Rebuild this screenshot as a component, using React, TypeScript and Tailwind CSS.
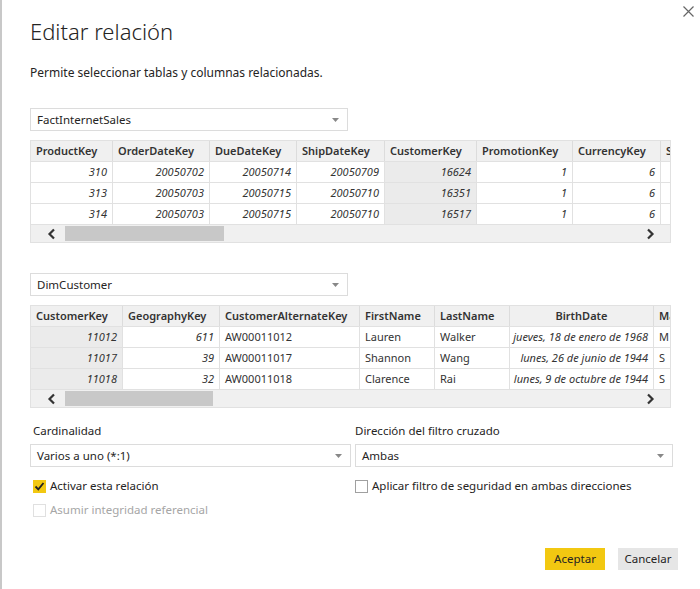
import React from "react";

const F = { fontFamily: "'Noto Sans', 'Open Sans', sans-serif" };

type Col = { name: string; w: number; shaded?: boolean; align?: "left" | "right"; italic?: boolean; headCenter?: boolean };

function Arrow() {
  return (
    <svg width="7" height="4" viewBox="0 0 7 4" className="shrink-0">
      <path d="M0 0 L7 0 L3.5 4 Z" fill="#888" />
    </svg>
  );
}

function Dropdown({ label, w }: { label: string; w: string }) {
  return (
    <div className={`${w} h-[23px] border border-[#dcdcdc] bg-white flex items-center justify-between pl-[6px] pr-[8px] text-[11.5px] text-[#252423]`}>
      <span>{label}</span>
      <Arrow />
    </div>
  );
}

function Chevron({ dir }: { dir: "l" | "r" }) {
  return (
    <svg width="10" height="12" viewBox="0 0 10 12">
      {dir === "l" ? (
        <path d="M7 1.5 L2.5 6 L7 10.5" stroke="#333" strokeWidth="2.2" fill="none" />
      ) : (
        <path d="M3 1.5 L7.5 6 L3 10.5" stroke="#333" strokeWidth="2.2" fill="none" />
      )}
    </svg>
  );
}

function Table({ cols, rows, thumb }: { cols: Col[]; rows: string[][]; thumb: number }) {
  return (
    <div className="w-[641px] border border-[#e1e1e1] overflow-hidden bg-white">
      <div className="flex h-[21px] bg-[#f0f0f0] border-b border-[#e1e1e1]">
        {cols.map((c, i) => (
          <div
            key={i}
            style={{ width: c.w }}
            className={`shrink-0 border-r border-[#dcdcdc] px-[5px] flex items-center text-[11px] font-semibold text-[#333] whitespace-nowrap overflow-hidden ${c.headCenter ? "justify-center" : ""}`}
          >
            {c.name}
          </div>
        ))}
      </div>
      {rows.map((r, ri) => (
        <div key={ri} className="flex h-[21px] border-b border-[#e1e1e1]">
          {cols.map((c, i) => (
            <div
              key={i}
              style={{ width: c.w }}
              className={`shrink-0 border-r border-[#e1e1e1] px-[5px] flex items-center text-[11px] text-[#333] whitespace-nowrap overflow-hidden ${c.shaded ? "bg-[#ebebeb]" : ""} ${c.align === "left" ? "justify-start" : "justify-end"} ${c.italic ? "italic" : ""}`}
            >
              {r[i]}
            </div>
          ))}
        </div>
      ))}
      <div className="flex h-[17px] bg-[#f0f0f0] items-center">
        <div className="w-[34px] flex justify-center pl-[8px]">
          <Chevron dir="l" />
        </div>
        <div style={{ width: thumb }} className="h-[15px] bg-[#c8c8c8]" />
        <div className="flex-1" />
        <div className="w-[32px] flex justify-center pr-[8px]">
          <Chevron dir="r" />
        </div>
      </div>
    </div>
  );
}

function Check({ checked, disabled }: { checked?: boolean; disabled?: boolean }) {
  if (checked)
    return (
      <div className="w-[13px] h-[13px] bg-[#f2c811] flex items-center justify-center shrink-0">
        <svg width="11" height="11" viewBox="0 0 11 11">
          <path d="M1.5 5.5 L4.3 8.3 L9.5 2" stroke="#222" strokeWidth="1.8" fill="none" />
        </svg>
      </div>
    );
  return (
    <div className={`w-[13px] h-[13px] border shrink-0 bg-white ${disabled ? "border-[#e0e0e0]" : "border-[#a0a0a0]"}`} />
  );
}

export default function App() {
  const cols1: Col[] = [
    { name: "ProductKey", w: 82, italic: true },
    { name: "OrderDateKey", w: 97, italic: true },
    { name: "DueDateKey", w: 87, italic: true },
    { name: "ShipDateKey", w: 88, italic: true },
    { name: "CustomerKey", w: 92, italic: true, shaded: true },
    { name: "PromotionKey", w: 96, italic: true },
    { name: "CurrencyKey", w: 88, italic: true },
    { name: "SalesTerritoryKey", w: 100, italic: true },
  ];
  const rows1 = [
    ["310", "20050702", "20050714", "20050709", "16624", "1", "6", ""],
    ["313", "20050703", "20050715", "20050710", "16351", "1", "6", ""],
    ["314", "20050703", "20050715", "20050710", "16517", "1", "6", ""],
  ];
  const cols2: Col[] = [
    { name: "CustomerKey", w: 92, italic: true, shaded: true },
    { name: "GeographyKey", w: 97, italic: true },
    { name: "CustomerAlternateKey", w: 140, align: "left" },
    { name: "FirstName", w: 75, align: "left" },
    { name: "LastName", w: 75, align: "left" },
    { name: "BirthDate", w: 144, italic: true, headCenter: true },
    { name: "MaritalStatus", w: 80, align: "left" },
  ];
  const rows2 = [
    ["11012", "611", "AW00011012", "Lauren", "Walker", "jueves, 18 de enero de 1968", "M"],
    ["11017", "39", "AW00011017", "Shannon", "Wang", "lunes, 26 de junio de 1944", "S"],
    ["11018", "32", "AW00011018", "Clarence", "Rai", "lunes, 9 de octubre de 1944", "S"],
  ];
  return (
    <div style={F} className="w-[700px] h-[589px] bg-white border-l-2 border-[#c8c8c8] relative overflow-hidden text-[#252423]">
      <button className="absolute right-[5px] top-[4px] w-[14px] h-[14px] flex items-center justify-center">
        <svg width="11" height="11" viewBox="0 0 11 11">
          <path d="M0.5 0.5 L10.5 10.5 M10.5 0.5 L0.5 10.5" stroke="#666" strokeWidth="1.2" />
        </svg>
      </button>
      <div className="pl-[28px] flex flex-col">
        <h1 className="mt-[16px] text-[22px] font-light leading-[30px] text-[#252423]">Editar relación</h1>
        <p className="mt-[18px] text-[12px] leading-[18px] text-[#252423]">Permite seleccionar tablas y columnas relacionadas.</p>
        <div className="mt-[26px]">
          <Dropdown label="FactInternetSales" w="w-[318px]" />
        </div>
        <div className="mt-[9px]">
          <Table cols={cols1} rows={rows1} thumb={159} />
        </div>
        <div className="mt-[30px]">
          <Dropdown label="DimCustomer" w="w-[318px]" />
        </div>
        <div className="mt-[9px]">
          <Table cols={cols2} rows={rows2} thumb={148} />
        </div>
        <div className="mt-[14px] flex">
          <div className="w-[325px] flex flex-col">
            <div className="pl-[3px] text-[11.5px] leading-[18px] text-[#252423]">Cardinalidad</div>
            <div className="mt-[4px]">
              <Dropdown label="Varios a uno (*:1)" w="w-[321px]" />
            </div>
            <div className="mt-[10px] h-[18px] pl-[3px] flex items-center gap-[4px] text-[11.5px]">
              <Check checked />
              <span>Activar esta relación</span>
            </div>
            <div className="mt-[6px] h-[18px] pl-[3px] flex items-center gap-[4px] text-[11.5px] text-[#a6a6a6]">
              <Check disabled />
              <span>Asumir integridad referencial</span>
            </div>
          </div>
          <div className="flex flex-col">
            <div className="text-[11.5px] leading-[18px] text-[#252423]">Dirección del filtro cruzado</div>
            <div className="mt-[4px]">
              <Dropdown label="Ambas" w="w-[318px]" />
            </div>
            <div className="mt-[10px] h-[18px] flex items-center gap-[4px] text-[11.5px]">
              <Check />
              <span>Aplicar filtro de seguridad en ambas direcciones</span>
            </div>
          </div>
        </div>
        <div className="mt-[29px] flex justify-end pr-[22px] gap-[13px]">
          <button className="w-[60px] h-[22px] bg-[#f2c811] text-[11.5px] text-[#252423] flex items-center justify-center">Aceptar</button>
          <button className="w-[60px] h-[22px] bg-[#e6e6e6] text-[11.5px] text-[#252423] flex items-center justify-center">Cancelar</button>
        </div>
      </div>
    </div>
  );
}
